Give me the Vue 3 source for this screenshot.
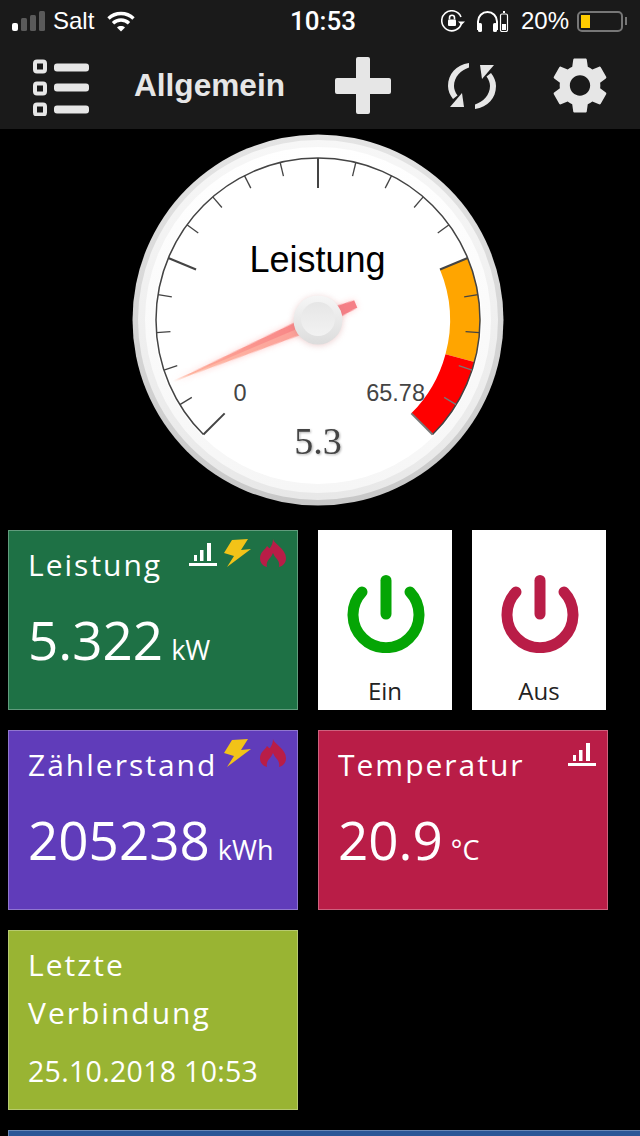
<script setup>
const CX = 318
const CY = 191
const R = 162

function polar(deg, r) {
  const a = (deg * Math.PI) / 180
  return { x: CX + r * Math.sin(a), y: CY - r * Math.cos(a) }
}

// 4 big sections, each split in 5 by small ticks
const ticks = []
for (let i = 0; i <= 20; i++) {
  const deg = -135 + i * 13.5
  const major = i % 5 === 0
  const a = polar(deg, R)
  const b = polar(deg, major ? R - 30 : R - 14)
  ticks.push({ x1: a.x, y1: a.y, x2: b.x, y2: b.y, major, hot: deg > 105 })
}

function bandPath(from, to) {
  const a = polar(from, R)
  const b = polar(to, R)
  const c = polar(to, 132)
  const d = polar(from, 132)
  return `M${a.x} ${a.y}A${R} ${R} 0 0 1 ${b.x} ${b.y}L${c.x} ${c.y}A132 132 0 0 0 ${d.x} ${d.y}Z`
}

const arcStart = polar(-135, R)
const arcEnd = polar(135, R)
const scaleArc = `M${arcStart.x} ${arcStart.y}A${R} ${R} 0 1 1 ${arcEnd.x} ${arcEnd.y}`
const orangeBand = bandPath(67.5, 105)
const redBand = bandPath(105, 135)
</script>

<template>
  <div class="screen">
    <header class="head">
      <div class="status">
        <svg class="signal" width="33" height="20" viewBox="0 0 33 20">
          <rect x="0" y="12" width="6" height="8" rx="2" fill="#fff" />
          <rect x="9" y="7" width="6" height="13" rx="1.5" fill="#5a5a5a" />
          <rect x="18" y="4" width="6" height="16" rx="1.5" fill="#5a5a5a" />
          <rect x="27" y="0" width="6" height="20" rx="1.5" fill="#5a5a5a" />
        </svg>
        <span class="carrier">Salt</span>
        <svg class="wifi" width="28" height="21" viewBox="0 0 28 21" fill="none" stroke="#fff" stroke-width="3.4">
          <path d="M1.5 7.5C8.5 .8 19.5 .8 26.5 7.5" />
          <path d="M6 12.2C10.5 8 17.5 8 22 12.2" />
          <path d="M14 20.5L10 16.4C12.2 14.5 15.8 14.5 18 16.4Z" fill="#fff" stroke="none" />
        </svg>
        <span class="clock">10:53</span>
        <svg class="rotlock" width="24" height="22" viewBox="0 0 24 22" fill="none" stroke="#fff" stroke-width="1.6">
          <path d="M20.5 13A10 10 0 1 1 20 7" />
          <path d="M17 11.5h7l-3.5 3.6Z" fill="#fff" stroke="none" />
          <rect x="7" y="9.5" width="8" height="6.5" rx="1" fill="#fff" stroke="none" />
          <path d="M8.5 9.5V7.8a2.5 2.5 0 0 1 5 0V9.5" />
        </svg>
        <svg class="phones" width="33" height="21" viewBox="0 0 33 21" fill="none" stroke="#fff">
          <path d="M2 19V10.500a9.500 9.500 0 0 1 19 0V19" stroke-width="2" />
          <rect x="2" y="12" width="4" height="9" rx="1.500" fill="#fff" stroke="none" />
          <rect x="17" y="12" width="4" height="9" rx="1.500" fill="#fff" stroke="none" />
          <rect x="24.500" y="3" width="7" height="17.500" rx="1.500" stroke-width="1.200" />
          <rect x="27" y="0" width="2" height="2" fill="#fff" stroke="none" />
          <rect x="26" y="13" width="4" height="6" fill="#fff" stroke="none" />
        </svg>
        <span class="percent">20%</span>
        <div class="battery"><div class="battery-fill"></div></div>
        <div class="battery-nub"></div>
      </div>

      <div class="toolbar">
        <svg class="icon-list" width="56" height="60" viewBox="0 0 56 60">
          <g fill="none" stroke="#e6e6e6" stroke-width="4">
            <rect x="2" y="5.5" width="10" height="10" rx="2" />
            <rect x="2" y="27.5" width="10" height="10" rx="2" />
            <rect x="2" y="48.5" width="10" height="10" rx="2" />
          </g>
          <g fill="#e6e6e6">
            <rect x="21" y="7.5" width="35" height="8" rx="3" />
            <rect x="21" y="27.5" width="35" height="8" rx="3" />
            <rect x="21" y="49.5" width="35" height="8" rx="3" />
          </g>
        </svg>
        <span class="title">Allgemein</span>
        <svg class="icon-plus" width="56" height="57" viewBox="0 0 56 57">
          <path d="M21 2a2 2 0 0 1 2-2h10a2 2 0 0 1 2 2v19h19a2 2 0 0 1 2 2v12a2 2 0 0 1-2 2H35v18a2 2 0 0 1-2 2H23a2 2 0 0 1-2-2V37H2a2 2 0 0 1-2-2V23a2 2 0 0 1 2-2h19Z" fill="#e6e6e6" />
        </svg>
        <svg class="icon-sync" width="48" height="48" viewBox="0 0 48 48" fill="#e6e6e6">
          <path d="M21 1C8 3 0 12 0 24C0 29 2 33 5 37L9.500 33.500C7 30 6 27 6 24C6 15 13 8 21 5.500Z" />
          <path d="M2 45L16 45L14 31Z" />
          <g transform="rotate(180 24 24)">
            <path d="M21 1C8 3 0 12 0 24C0 29 2 33 5 37L9.500 33.500C7 30 6 27 6 24C6 15 13 8 21 5.500Z" />
            <path d="M2 45L16 45L14 31Z" />
          </g>
        </svg>
        <svg class="icon-gear" width="54" height="57" viewBox="2.500 1.900 19 20.200">
          <path d="M19.140 12.940c.04-.3.06-.61.06-.94 0-.32-.02-.64-.07-.94l2.030-1.580c.18-.14.23-.41.12-.61l-1.920-3.320c-.12-.22-.37-.29-.59-.22l-2.390.96c-.5-.38-1.030-.7-1.620-.94l-.36-2.540c-.04-.24-.24-.41-.48-.41h-3.840c-.24 0-.43.17-.47.41l-.36 2.540c-.59.24-1.130.57-1.620.94l-2.390-.96c-.22-.08-.47 0-.59.22L2.740 8.870c-.12.21-.08.47.12.61l2.030 1.580c-.05.3-.09.63-.09.94s.02.64.07.94l-2.030 1.580c-.18.14-.23.41-.12.61l1.920 3.320c.12.22.37.29.59.22l2.390-.96c.5.38 1.030.7 1.620.94l.36 2.540c.05.24.24.41.48.41h3.840c.24 0 .44-.17.47-.41l.36-2.540c.59-.24 1.130-.56 1.620-.94l2.390.96c.22.08.47 0 .59-.22l1.920-3.320c.12-.22.07-.47-.12-.61l-2.010-1.580zM12 15.600c-1.980 0-3.600-1.620-3.600-3.600s1.620-3.600 3.600-3.600 3.600 1.620 3.600 3.600-1.620 3.600-3.600 3.600z" fill="#e6e6e6" />
        </svg>
      </div>
    </header>

    <svg class="gauge" width="640" height="401" viewBox="0 0 640 401">
      <defs>
        <linearGradient id="rim1" x1="0" y1="0" x2="0" y2="1">
          <stop offset="0" stop-color="#e4e4e4" />
          <stop offset="1" stop-color="#c8c8c8" />
        </linearGradient>
        <linearGradient id="rim2" x1="0" y1="0" x2="0" y2="1">
          <stop offset="0" stop-color="#f7f7f7" />
          <stop offset="1" stop-color="#e8e8e8" />
        </linearGradient>
        <linearGradient id="rim3" x1="0" y1="0" x2="0" y2="1">
          <stop offset="0" stop-color="#ffffff" />
          <stop offset="1" stop-color="#f6f6f6" />
        </linearGradient>
        <linearGradient id="hubOuter" x1="0" y1="0" x2="0" y2="1">
          <stop offset="0" stop-color="#f6f6f6" />
          <stop offset="1" stop-color="#dcdcdc" />
        </linearGradient>
        <linearGradient id="hubInner" x1="0" y1="0" x2="0" y2="1">
          <stop offset="0" stop-color="#e6e6e6" />
          <stop offset="1" stop-color="#f2f2f2" />
        </linearGradient>
        <linearGradient id="needleLight" x1="0" y1="0" x2="0" y2="1">
          <stop offset="0" stop-color="#ffc0a8" />
          <stop offset="1" stop-color="#fb9a96" />
        </linearGradient>
        <linearGradient id="needleDark" x1="0" y1="0" x2="0" y2="1">
          <stop offset="0" stop-color="#ffb09a" />
          <stop offset="1" stop-color="#f77f84" />
        </linearGradient>
      </defs>

      <circle :cx="CX" :cy="CY" r="185.500" fill="url(#rim1)" />
      <circle :cx="CX" :cy="CY" r="180" fill="url(#rim2)" />
      <circle :cx="CX" :cy="CY" r="173" fill="url(#rim3)" />
      <circle :cx="CX" :cy="CY" r="164" fill="#fff" />

      <path :d="orangeBand" fill="#ffa500" />
      <path :d="redBand" fill="#ff0000" />
      <path :d="scaleArc" fill="none" stroke="#444" stroke-width="1.500" />
      <line
        v-for="(t, i) in ticks"
        :key="i"
        :x1="t.x1"
        :y1="t.y1"
        :x2="t.x2"
        :y2="t.y2"
        :stroke="t.hot ? '#777' : '#444'"
        :stroke-width="t.major ? 2 : 1.300"
      />

      <text x="317.500" y="143" class="g-title" text-anchor="middle">Leistung</text>
      <text x="240" y="272" class="g-limit" text-anchor="middle">0</text>
      <text x="425" y="272" class="g-limit" text-anchor="end">65.78</text>
      <text x="318" y="325" class="g-value" text-anchor="middle">5.3</text>

      <g class="needle" :transform="`rotate(-113 ${CX} ${CY})`">
        <path :d="`M${CX} ${CY - 157}L${CX - 8} ${CY}L${CX} ${CY}Z`" fill="url(#needleLight)" />
        <path :d="`M${CX} ${CY - 157}L${CX + 8} ${CY}L${CX} ${CY}Z`" fill="url(#needleDark)" />
        <path :d="`M${CX - 8} ${CY}L${CX + 8} ${CY}L${CX + 4} ${CY + 41}L${CX - 4} ${CY + 41}Z`" fill="#f57f86" />
      </g>
      <circle class="hub" :cx="CX" :cy="CY" r="24.500" fill="url(#hubOuter)" />
      <circle :cx="CX" :cy="CY - 1" r="17" fill="url(#hubInner)" />
    </svg>

    <div class="row">
      <div class="tile green">
        <div class="tile-icons">
          <svg width="28" height="23" viewBox="0 0 28 23" fill="#fff">
            <rect x="5" y="12" width="3" height="6" />
            <rect x="11" y="7" width="3.500" height="11" />
            <rect x="18" y="0" width="4" height="18" />
            <rect x="0" y="20" width="28" height="3" />
          </svg>
          <svg class="bolt" width="28" height="28" viewBox="0 0 28 28"><path d="M8 1L24 0L17 11L27 10L3 28L10 17L0 14Z" fill="#f2c318" /></svg>
          <svg class="flame" width="26" height="28" viewBox="0 0 26 28"><path d="M13 0C14 5 26 10 26 19C26 24 23 27 19 28C20 24 18 21 16 19C15 18 14 16 13 14C12 16 11 18 10 19C8 21 6 24 7 28C3 27 0 24 0 19C0 13 5 11 7 7C8.500 8.500 9.500 9.500 10 9C11.500 7 13 4 13 0Z" fill="#b91d47" /></svg>
        </div>
        <div class="tile-label">Leistung</div>
        <div class="tile-value">5.322<span class="unit">kW</span></div>
      </div>
      <div class="switch">
        <svg width="78" height="78" viewBox="0 0 78 78" fill="none" stroke="#05a505" stroke-width="11" stroke-linecap="round">
          <path d="M15 17A33 33 0 1 0 63 17" />
          <path d="M39 5.500V39" />
        </svg>
        <span>Ein</span>
      </div>
      <div class="switch">
        <svg width="78" height="78" viewBox="0 0 78 78" fill="none" stroke="#b91d47" stroke-width="11" stroke-linecap="round">
          <path d="M15 17A33 33 0 1 0 63 17" />
          <path d="M39 5.500V39" />
        </svg>
        <span>Aus</span>
      </div>
    </div>

    <div class="row">
      <div class="tile purple">
        <div class="tile-icons">
          <svg class="bolt" width="28" height="28" viewBox="0 0 28 28"><path d="M8 1L24 0L17 11L27 10L3 28L10 17L0 14Z" fill="#f2c318" /></svg>
          <svg class="flame" width="26" height="28" viewBox="0 0 26 28"><path d="M13 0C14 5 26 10 26 19C26 24 23 27 19 28C20 24 18 21 16 19C15 18 14 16 13 14C12 16 11 18 10 19C8 21 6 24 7 28C3 27 0 24 0 19C0 13 5 11 7 7C8.500 8.500 9.500 9.500 10 9C11.500 7 13 4 13 0Z" fill="#b91d47" /></svg>
        </div>
        <div class="tile-label">Zählerstand</div>
        <div class="tile-value">205238<span class="unit">kWh</span></div>
      </div>
      <div class="tile crimson">
        <div class="tile-icons">
          <svg width="28" height="23" viewBox="0 0 28 23" fill="#fff">
            <rect x="5" y="12" width="3" height="6" />
            <rect x="11" y="7" width="3.500" height="11" />
            <rect x="18" y="0" width="4" height="18" />
            <rect x="0" y="20" width="28" height="3" />
          </svg>
        </div>
        <div class="tile-label">Temperatur</div>
        <div class="tile-value">20.9<span class="unit">°C</span></div>
      </div>
    </div>

    <div class="row">
      <div class="tile lime">
        <div class="tile-label wrap">Letzte<br />Verbindung</div>
        <div class="tile-date">25.10.2018 10:53</div>
      </div>
    </div>

    <div class="row">
      <div class="tile blue wide"></div>
    </div>
  </div>
</template>

<style>
html, body {
  margin: 0;
  background: #000;
}
</style>

<style scoped>
.screen {
  width: 640px;
  height: 1136px;
  overflow: hidden;
  background: #000;
  font-family: "Open Sans", sans-serif;
}

.head {
  height: 129px;
  background: #1a1a1a;
}

.status {
  display: flex;
  align-items: center;
  height: 40px;
  padding: 1px 0 0 12px;
  color: #fff;
  font-family: "Liberation Sans", sans-serif;
  font-size: 24px;
}
.status svg {
  flex: none;
}
.carrier {
  margin-left: 8px;
  width: 46px;
}
.wifi {
  margin-left: 8px;
}
.clock {
  margin-left: 155px;
  width: 66px;
  font-family: Roboto, sans-serif;
  font-size: 26px;
  font-weight: 500;
}
.rotlock {
  margin-left: 85px;
}
.phones {
  margin-left: 11px;
}
.percent {
  margin-left: 12px;
  width: 48px;
}
.battery {
  margin-left: 8px;
  width: 46px;
  height: 21px;
  box-sizing: border-box;
  border: 2px solid #777;
  border-radius: 5px;
  padding: 2px;
}
.battery-fill {
  width: 9px;
  height: 100%;
  background: #ffcc00;
}
.battery-nub {
  margin-left: 2px;
  width: 2px;
  height: 8px;
  background: #777;
}

.toolbar {
  display: flex;
  align-items: center;
  height: 89px;
  padding-left: 33px;
}
.toolbar svg {
  flex: none;
}
.title {
  margin-left: 45px;
  width: 156px;
  color: #e6e6e6;
  font-family: "Liberation Sans", sans-serif;
  font-size: 31.600px;
  font-weight: 700;
}
.icon-plus {
  margin-left: 45px;
}
.icon-sync {
  margin-left: 57px;
}
.icon-gear {
  margin-left: 57px;
}

.gauge {
  display: block;
}
.g-title {
  font-family: "Liberation Sans", sans-serif;
  font-size: 36px;
  fill: #000;
}
.g-limit {
  font-family: "Liberation Sans", sans-serif;
  font-size: 23.500px;
  fill: #444;
}
.g-value {
  font-family: "Liberation Serif", serif;
  font-size: 38px;
  fill: #444;
  filter: drop-shadow(1px 1px 1px rgba(0, 0, 0, 0.3));
}
.needle {
  filter: drop-shadow(0 0 3px rgba(255, 120, 120, 0.35));
}
.hub {
  filter: drop-shadow(0 1px 3px rgba(200, 120, 120, 0.35));
}

.row {
  display: flex;
  gap: 20px;
  padding-left: 8px;
  margin-bottom: 20px;
}

.tile {
  position: relative;
  box-sizing: border-box;
  flex: none;
  width: 290px;
  height: 180px;
  padding: 12px 19px 0;
  border: 1px solid rgba(255, 255, 255, 0.3);
  color: #fff;
}
.tile.wide {
  width: 640px;
}
.green { background: #1e7145; }
.purple { background: #603cba; }
.crimson { background: #b91d47; }
.lime { background: #99b433; }
.blue { background: #2b5797; }

.tile-icons {
  position: absolute;
  top: 8px;
  right: 11px;
  display: flex;
  align-items: flex-start;
  gap: 7px;
}
.tile-icons svg:not(.bolt):not(.flame) {
  margin-top: 4px;
}
.flame {
  margin-left: 1px;
}

.tile-label {
  font-size: 30px;
  font-weight: 500;
  line-height: 44px;
  letter-spacing: 2px;
  white-space: nowrap;
}
.tile-label.wrap {
  margin-top: -2px;
  line-height: 48px;
}
.tile-value {
  margin-top: 18px;
  font-size: 53px;
  font-weight: 400;
  line-height: 70px;
}
.unit {
  margin-left: 8px;
  font-size: 27px;
}
.tile-date {
  margin-top: 14px;
  font-size: 28.500px;
  font-weight: 400;
  line-height: 40px;
  letter-spacing: 0.300px;
}

.switch {
  box-sizing: border-box;
  flex: none;
  width: 134px;
  height: 180px;
  padding-top: 45px;
  background: #fff;
  color: #222;
  display: flex;
  flex-direction: column;
  align-items: center;
  font-size: 24px;
}
.switch svg {
  margin-left: 1px;
}
.switch span {
  margin-top: 20px;
  line-height: 36px;
}
</style>
